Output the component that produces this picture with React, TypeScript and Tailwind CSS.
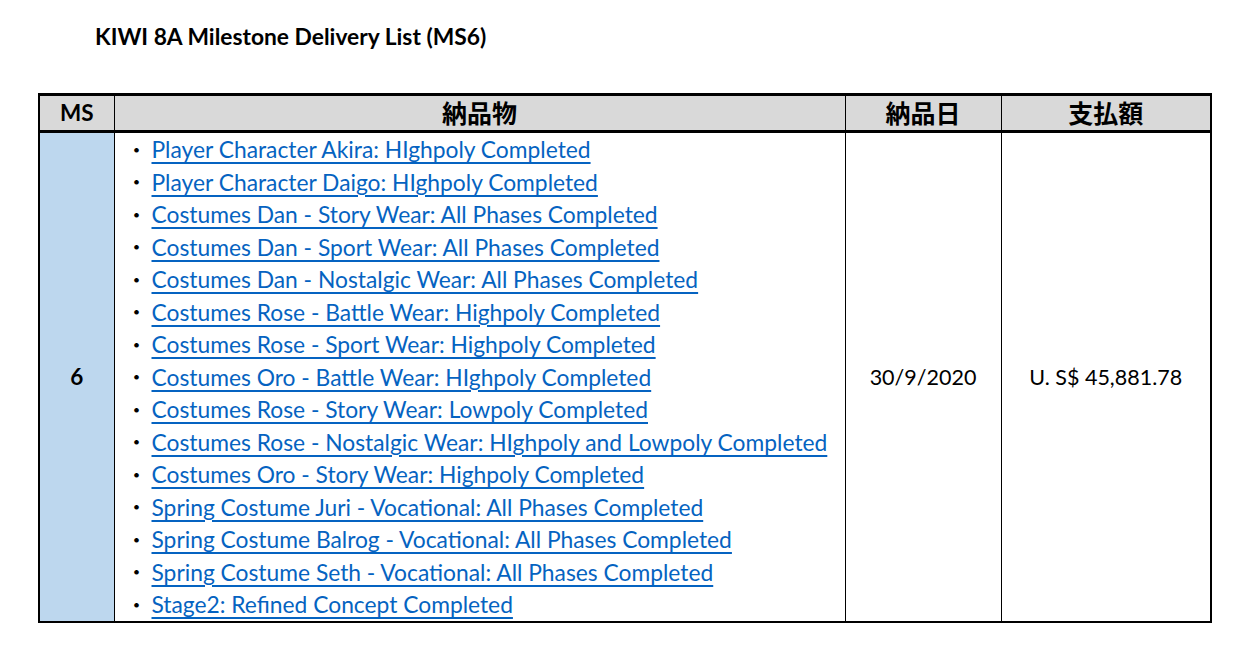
// KIWI 8A milestone delivery list, rendered as a bordered sheet-style table.
const items = [
  'Player Character Akira: HIghpoly Completed',
  'Player Character Daigo: HIghpoly Completed',
  'Costumes Dan - Story Wear: All Phases Completed',
  'Costumes Dan - Sport Wear: All Phases Completed',
  'Costumes Dan - Nostalgic Wear: All Phases Completed',
  'Costumes Rose - Battle Wear: Highpoly Completed',
  'Costumes Rose - Sport Wear: Highpoly Completed',
  'Costumes Oro - Battle Wear: HIghpoly Completed',
  'Costumes Rose - Story Wear: Lowpoly Completed',
  'Costumes Rose - Nostalgic Wear: HIghpoly and Lowpoly Completed',
  'Costumes Oro - Story Wear: Highpoly Completed',
  'Spring Costume Juri - Vocational: All Phases Completed',
  'Spring Costume Balrog - Vocational: All Phases Completed',
  'Spring Costume Seth - Vocational: All Phases Completed',
  'Stage2: Refined Concept Completed',
]

const font = "font-['Lato','Noto_Sans_CJK_JP',sans-serif]"

export default function App() {
  return (
    <div className={`w-[1243px] h-[654px] bg-white text-black ${font}`}>
      <h1 className="pl-[95px] pt-[21px] text-[22.8px] leading-[30px] font-bold">
        KIWI 8A Milestone Delivery List (MS6)
      </h1>

      <table className="ml-[38px] mt-[42px] w-[1174px] border-collapse table-fixed border-2 border-t-[3px] border-black">
        <colgroup>
          <col className="w-[75px]" />
          <col className="w-[731px]" />
          <col className="w-[156px]" />
          <col />
        </colgroup>
        <thead>
          <tr className="h-[36px] bg-[#d9d9d9] border-b-[3px] border-black leading-[34px]">
            <th className="border-r border-black text-[22.5px] font-bold">MS</th>
            <th className="border-r border-black text-[25px] font-bold">納品物</th>
            <th className="border-r border-black text-[25px] font-bold">納品日</th>
            <th className="text-[25px] font-bold">支払額</th>
          </tr>
        </thead>
        <tbody>
          <tr>
            <td className="bg-[#bdd7ee] border-r border-black text-center text-[22.5px] font-bold">6</td>
            <td className="border-r border-black py-0 pl-[13px]">
              <ul>
                {items.map(item => (
                  <li key={item} className="h-[32.5px] flex items-center text-[22.8px]">
                    <span className="w-[24px] shrink-0 font-['Noto_Sans_CJK_JP',sans-serif] text-[18px] font-bold">・</span>
                    <a
                      href="#"
                      className="text-[#0563c1] underline underline-offset-[4px] decoration-[1.5px]"
                    >
                      {item}
                    </a>
                  </li>
                ))}
              </ul>
            </td>
            <td className="border-r border-black text-center text-[21.5px]">30/9/2020</td>
            <td className="text-center text-[21.5px]">U. S$ 45,881.78</td>
          </tr>
        </tbody>
      </table>
    </div>
  )
}
